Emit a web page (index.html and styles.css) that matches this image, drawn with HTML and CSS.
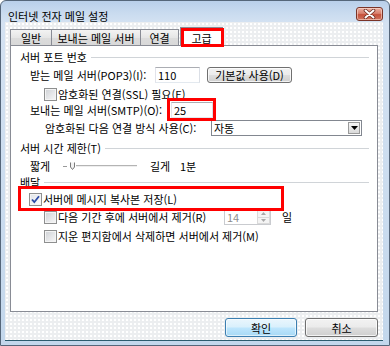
FILE: index.html
```html
<!DOCTYPE html>
<html lang="ko">
<head>
<meta charset="utf-8">
<title>인터넷 전자 메일 설정</title>
<link rel="stylesheet" href="styles.css">
</head>
<body>
<div class="window">
  <div class="titlebar">
    <span class="title">인터넷 전자 메일 설정</span>
    <div class="close">
      <svg width="13" height="10" viewBox="0 0 13 10">
        <path d="M2.5 1.5 L10.5 8.5 M10.5 1.5 L2.5 8.5" stroke="#6b2d22" stroke-width="3.6" stroke-linecap="round"/>
        <path d="M2.5 1.5 L10.5 8.5 M10.5 1.5 L2.5 8.5" stroke="#ffffff" stroke-width="2" stroke-linecap="round"/>
      </svg>
    </div>
  </div>
  <div class="client">
    <div class="tabs">
      <div class="tab t1">일반</div>
      <div class="tab t2">보내는 메일 서버</div>
      <div class="tab t3">연결</div>
      <div class="tab active">고급<span class="mark mark-tab"></span></div>
    </div>
    <div class="page">
      <div class="group g1"><span>서버 포트 번호</span><i class="rule"></i></div>
      <div class="row r-pop3">
        <span class="lbl lbl-pop3">받는 메일 서버(POP3)(I):</span>
        <span class="field f-pop3">110</span>
        <span class="btn btn-default">기본값 사용(D)</span>
      </div>
      <div class="row r-ssl"><span class="cb"></span><span class="cb-text">암호화된 연결(SSL) 필요(E)</span></div>
      <div class="row r-smtp">
        <span class="lbl lbl-smtp">보내는 메일 서버(SMTP)(O):</span>
        <span class="field f-smtp">25<span class="mark mark-smtp"></span></span>
      </div>
      <div class="row r-enc">
        <span class="lbl lbl-enc">암호화된 다음 연결 방식 사용(C):</span>
        <span class="select"><span class="sel-text">자동</span><span class="sel-btn"><svg width="7" height="4" viewBox="0 0 7 4"><path d="M0 0 H7 L3.5 4 Z" fill="#000"/></svg></span></span>
      </div>
      <div class="group g2"><span>서버 시간 제한(T)</span><i class="rule"></i></div>
      <div class="row r-slider">
        <span class="lbl-short">짧게</span>
        <svg class="slider" width="76" height="12" viewBox="0 0 76 12">
          <path d="M1 6.5 H5" stroke="#9a9a9a" stroke-width="1"/>
          <path d="M14 5.5 H75" stroke="#b4b4b4" stroke-width="1"/>
          <path d="M14 6.5 H75" stroke="#eeeeee" stroke-width="1"/>
          <path d="M8.5 2.5 V7 L10.5 9.5 L12.5 7 V2.5" stroke="#7a7a7a" stroke-width="1" fill="#f2f2f2"/>
        </svg>
        <span class="lbl-long">길게</span>
        <span>1분</span>
      </div>
      <div class="group g3"><span>배달</span><i class="rule"></i></div>
      <div class="row r-copy">
        <span class="cb checked"><svg width="11" height="11" viewBox="0 0 11 11"><path d="M2 5.5 L4.3 8.2 L9 2.2" stroke="#2a4aa6" stroke-width="1.8" fill="none"/></svg></span>
        <span class="cb-text">서버에 메시지 복사본 저장(L)</span>
        <span class="mark mark-copy"></span>
      </div>
      <div class="row r-remove">
        <span class="cb"></span>
        <span class="cb-text lbl-remove">다음 기간 후에 서버에서 제거(R)</span>
        <span class="spin"><span class="spin-text">14</span><span class="spin-btns"><span class="spin-up"><svg width="5" height="3" viewBox="0 0 5 3"><path d="M0 3 L2.5 0 L5 3 Z" fill="#a8a8a8"/></svg></span><span class="spin-down"><svg width="5" height="3" viewBox="0 0 5 3"><path d="M0 0 H5 L2.5 3 Z" fill="#a8a8a8"/></svg></span></span></span>
        <span class="day">일</span>
      </div>
      <div class="row r-deleted"><span class="cb"></span><span class="cb-text">지운 편지함에서 삭제하면 서버에서 제거(M)</span></div>
    </div>
    <div class="buttons">
      <span class="btn btn-ok">확인</span>
      <span class="btn btn-cancel">취소</span>
    </div>
  </div>
</div>
</body>
</html>
```
FILE: styles.css
```css
* { box-sizing: border-box; }
html, body { margin: 0; padding: 0; }
body {
  font: 11px/12px "Noto Sans CJK KR", "Noto Sans", sans-serif;
  color: #000;
  background: #fff;
}
.window {
  width: 390px;
  height: 346px;
  border: 1px solid #55667a;
  border-radius: 6px 6px 0 0;
  background: linear-gradient(#b9cfea 0, #c9dbef 12px, #d4e2f2 22px, #c3d7ec 100%);
  display: flex;
  flex-direction: column;
  overflow: hidden;
}
.titlebar {
  height: 21px;
  display: flex;
  justify-content: space-between;
  align-items: flex-start;
  padding: 6px 6px 0 7px;
}
.title {
  margin-top: 3px;
  line-height: 12px;
}
.close {
  width: 27px;
  height: 14px;
  border: 1px solid #7a3428;
  border-radius: 3px;
  background: linear-gradient(#eab0a3 0%, #d8806d 45%, #c5513b 55%, #cf7560 100%);
  box-shadow: inset 0 0 0 1px rgba(255, 225, 215, 0.55);
  display: flex;
  align-items: center;
  justify-content: center;
}
.client {
  margin: 0 6px 5px 4px;
  flex: 1;
  display: flex;
  flex-direction: column;
  padding-top: 5px;
  background-color: #eceef0;
  background-image: radial-gradient(circle, #ffffff 0.7px, transparent 1.1px);
  background-size: 4px 4px;
  box-shadow: 0 1px 0 #2c5b6e;
}
.tabs {
  height: 18px;
  margin-left: 5px;
  display: flex;
  align-items: flex-end;
  position: relative;
  z-index: 2;
}
.tab {
  height: 16px;
  border: 1px solid #898c95;
  border-bottom: none;
  background: linear-gradient(#f3f3f3, #e6e6e6 50%, #dcdcdc 51%, #d8d8d8);
  text-align: center;
  line-height: 12px;
  padding-top: 2px;
  white-space: nowrap;
}
.t1 { width: 42px; }
.t2 { width: 90px; margin-left: -1px; }
.t3 { width: 39px; margin-left: -1px; }
.tab.active {
  position: relative;
  width: 43px;
  height: 19px;
  margin-left: 1px;
  margin-bottom: -1px;
  background: #fff;
  padding-top: 4px;
}
.mark {
  position: absolute;
  border: 3px solid #ff0000;
  z-index: 5;
}
.mark-tab { left: 0; top: 0; width: 43px; height: 19px; }
.page {
  position: relative;
  z-index: 1;
  margin: 0 5px 0 5px;
  height: 267px;
  background: #fff;
  border: 1px solid #898c95;
  display: flex;
  flex-direction: column;
}
.group {
  height: 14px;
  display: flex;
  align-items: center;
  padding: 0 8px 0 9px;
  white-space: nowrap;
}
.rule {
  flex: 1;
  height: 0;
  margin-left: 4px;
  border-top: 1px solid #d0d4d8;
}
.row {
  position: relative;
  height: 14px;
  display: flex;
  align-items: center;
  white-space: nowrap;
}
.g1 { margin-top: 4px; }
.r-pop3 { margin-top: 4px; padding-left: 19px; }
.r-ssl { margin-top: 5px; padding-left: 33px; }
.r-smtp { margin-top: 2px; padding-left: 19px; }
.r-enc { margin-top: 4px; padding-left: 34px; }
.g2 { margin-top: 6px; }
.r-slider { margin-top: 4px; padding-left: 19px; }
.g3 { margin-top: 2px; }
.r-copy { margin-top: 3px; padding-left: 18px; }
.r-remove { margin-top: 4px; padding-left: 33px; }
.r-deleted { margin-top: 5px; padding-left: 33px; }

.lbl-pop3 { width: 125px; }
.lbl-smtp { width: 141px; }
.lbl-enc { width: 166px; }
.field {
  position: relative;
  height: 16px;
  flex: none;
  border: 1px solid #abadb3;
  border-left-color: #e2e3ea;
  border-right-color: #dbdfe6;
  border-bottom-color: #e3e9ef;
  background: #fff;
  padding: 1px 0 0 2px;
  line-height: 12px;
}
.f-pop3 { width: 45px; margin-right: 7px; }
.f-smtp { width: 42px; }
.mark-smtp { left: -5px; top: -5px; width: 49px; height: 23px; }
.btn {
  display: flex;
  align-items: center;
  justify-content: center;
  flex: none;
  border: 1px solid #707070;
  border-radius: 3px;
  background: linear-gradient(#f2f2f2 0%, #ebebeb 48%, #dddddd 52%, #cfcfcf 100%);
  box-shadow: inset 0 0 0 1px rgba(255, 255, 255, 0.75);
}
.btn-default { width: 85px; height: 16px; }
.select {
  width: 151px;
  height: 16px;
  border: 1px solid #828790;
  background: #fff;
  display: flex;
  align-items: center;
  justify-content: space-between;
  padding-left: 2px;
}
.sel-btn {
  width: 12px;
  height: 12px;
  margin-right: 1px;
  border: 1px solid #9a9a9a;
  background: linear-gradient(#f6f6f6, #dadada);
  display: flex;
  align-items: center;
  justify-content: center;
}
.cb {
  width: 13px;
  height: 13px;
  flex: none;
  border: 1px solid #8e8f8f;
  background: linear-gradient(135deg, #cdd0d4 0%, #e6e7e9 55%, #f7f7f7 100%);
  box-shadow: inset 0 0 0 1px #f4f4f4;
  display: flex;
  align-items: center;
  justify-content: center;
}
.cb.checked {
  background: linear-gradient(135deg, #dfe3e8 0%, #f2f3f5 60%, #ffffff 100%);
}
.cb-text { margin-left: 1px; }
.lbl-remove { width: 166px; }
.mark-copy { left: 7px; top: -6px; width: 266px; height: 25px; }
.lbl-short { width: 32px; }
.slider { flex: none; }
.lbl-long { margin-left: 12px; width: 30px; }
.spin {
  width: 47px;
  height: 16px;
  flex: none;
  border: 1px solid #c9cbcf;
  background: #fff;
  display: flex;
  justify-content: space-between;
}
.spin-text { color: #8d8d8d; padding: 1px 0 0 2px; line-height: 12px; }
.spin-btns { width: 13px; display: flex; flex-direction: column; }
.spin-up, .spin-down {
  flex: 1;
  border: 1px solid #dadada;
  background: #f4f4f4;
  display: flex;
  align-items: center;
  justify-content: center;
}
.spin-down { border-top: none; }
.day { margin-left: 11px; }
.buttons {
  margin-top: 6px;
  display: flex;
  justify-content: flex-end;
  gap: 8px;
  padding-right: 5px;
}
.btn-ok {
  width: 72px;
  height: 19px;
  border-color: #3c7fb1;
  background: linear-gradient(#eaf6fd 0%, #d9f0fc 48%, #bee6fd 52%, #a7d9f5 100%);
  box-shadow: inset 0 0 0 1px rgba(255, 255, 255, 0.6);
}
.btn-cancel { width: 73px; height: 19px; }
```
